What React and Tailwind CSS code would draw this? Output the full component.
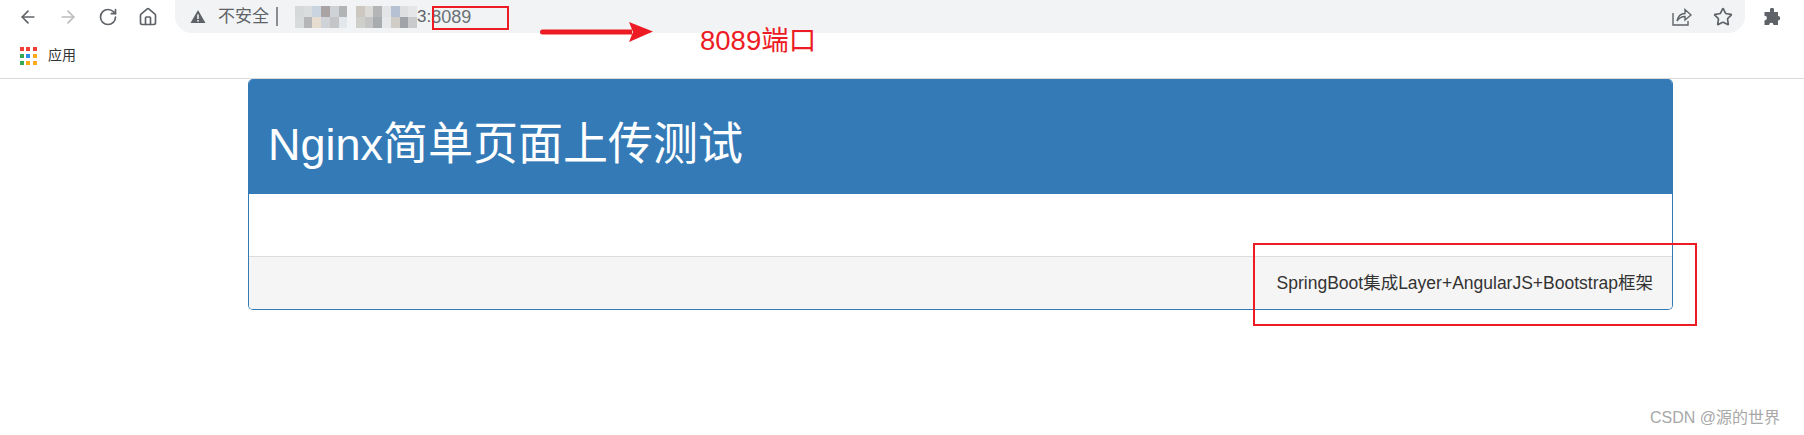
import React from 'react';
import { ArrowLeft, ArrowRight, RotateCw, Home, Star } from 'lucide-react';

const FONT = 'font-["Liberation_Sans","Noto_Sans_CJK_SC",sans-serif]';

const appsColors = [
    'bg-[#ef4136]', 'bg-[#ef4136]', 'bg-[#ef4136]',
    'bg-[#34a853]', 'bg-[#2d8cf0]', 'bg-[#fbab18]',
    'bg-[#34a853]', 'bg-[#fbab18]', 'bg-[#fbab18]',
];

// blurred-out IP address in the address bar, two rows of tiles
const mosaic = [
    'bg-[#d5d9d9]', 'bg-[#d9dddd]', 'bg-[#c9d4e0]', 'bg-[#a9a3a3]', 'bg-[#cfd2d6]', 'bg-[#b2b4b6]', 'bg-[#f1f3f4]',
    'bg-[#ccc7bf]', 'bg-[#dcdad6]', 'bg-[#b3b5b7]', 'bg-[#e3e5e6]', 'bg-[#b6c2d3]', 'bg-[#dddfe1]', 'bg-[#e4e6e7]',
    'bg-[#d8dbdb]', 'bg-[#b4b6b7]', 'bg-[#e6dccf]', 'bg-[#cfd2d6]', 'bg-[#c3c5c7]', 'bg-[#e2e7ec]', 'bg-[#f1f3f4]',
    'bg-[#cfcfcc]', 'bg-[#c4c5c4]', 'bg-[#a9acae]', 'bg-[#e6e8e9]', 'bg-[#d0ccc6]', 'bg-[#a0a4a8]', 'bg-[#c8cacc]',
];

export default function App() {
    return (
        <div className={`relative w-[1804px] h-[435px] overflow-hidden bg-white ${FONT}`}>
            {/* Browser chrome */}
            <div className="h-[79px] border-b border-[#d9d9d9]">
                <div className="flex h-[33px] items-center text-[#5f6368]">
                    <div className="flex w-[175px] items-center gap-[20px] pl-[18px]">
                        <ArrowLeft size={20} strokeWidth={2} />
                        <ArrowRight size={20} strokeWidth={2} className="text-[#bcbcbc]" />
                        <RotateCw size={20} strokeWidth={2} />
                        <Home size={20} strokeWidth={2} />
                    </div>
                    <div className="flex h-[33px] w-[1570px] items-center rounded-b-[17px] bg-[#f1f3f4] pl-[15px] pr-[12px]">
                        <svg width="16" height="15" viewBox="0 0 16 15" fill="#5f6368">
                            <path d="M8 1 L15.5 14 H0.5 Z" />
                            <rect x="7.2" y="5.5" width="1.6" height="4.5" fill="#f1f3f4" />
                            <rect x="7.2" y="11" width="1.6" height="1.6" fill="#f1f3f4" />
                        </svg>
                        <span className="ml-[12px] text-[17px] leading-none text-[#5f6368]">不安全</span>
                        <span className="ml-[7px] h-[19px] w-[2px] bg-[#8a8d91]" />
                        <div className="ml-[17px] grid h-[22px] w-[122px] grid-cols-[repeat(14,1fr)]">
                            {mosaic.map((c, i) => (
                                <div key={i} className={c} />
                            ))}
                        </div>
                        <span className="text-[17px] leading-none text-[#5f6368]">3:</span>
                        <span className="text-[18px] leading-none text-[#6b7075]">8089</span>
                        <div className="ml-auto flex items-center gap-[21px]">
                            <svg width="20" height="19" viewBox="0 0 20 19" fill="none" stroke="#5f6368" strokeWidth="1.4">
                                <path d="M1 6 V18 H16 V14" />
                                <path d="M5 14 C6 9 9 6.5 13 6.5 V2.5 L19 8 L13 13 V9.5 C10 9.5 7 11 5 14 Z" />
                            </svg>
                            <Star size={20} strokeWidth={2} />
                        </div>
                    </div>
                    <svg className="ml-[18px]" width="18" height="18" viewBox="0 0 18 18" fill="#5f6368">
                        <path d="M7 1 a2.2 2.2 0 0 1 4 0 V4 H15 V8 a2.2 2.2 0 0 1 0 4.4 V17 H10.5 a2.2 2.2 0 0 0 -4.4 0 H1.5 V12.5 a2.4 2.4 0 0 0 0 -4.8 V4 H7 Z" />
                    </svg>
                </div>
                <div className="flex h-[45px] items-center pl-[20px]">
                    <div className="grid w-[16px] grid-cols-3 gap-[3px]">
                        {appsColors.map((c, i) => (
                            <div key={i} className={`h-[4px] w-[4px] ${c}`} />
                        ))}
                    </div>
                    <span className="ml-[12px] text-[14px] text-[#333333]">应用</span>
                </div>
            </div>

            {/* Page panel */}
            <div className="ml-[248px] w-[1425px] overflow-hidden rounded-[5px] border border-t-0 border-[#337ab7]">
                <div className="flex h-[115px] items-center bg-[#337ab7] pl-[19px] pt-[16px] text-[45px] text-white">
                    Nginx简单页面上传测试
                </div>
                <div className="h-[62px] bg-white" />
                <div className="flex h-[53px] items-center justify-end border-t border-[#dddddd] bg-[#f5f5f5] pr-[19px] text-[17.5px] text-[#333333]">
                    SpringBoot集成Layer+AngularJS+Bootstrap框架
                </div>
            </div>

            {/* Red annotations drawn on top of the screenshot */}
            <div className="absolute left-[432px] top-[6px] h-[24px] w-[77px] border-2 border-[#ed1c24]" />
            <svg className="absolute left-[540px] top-[20px]" width="114" height="24" viewBox="0 0 114 24" fill="#ed1c24">
                <path d="M2.5 9.5 H92 V14.5 H2.5 a2.5 2.5 0 0 1 0 -5 Z" />
                <path d="M89 2 L113 11.5 L89 22 L93 12 Z" />
            </svg>
            <div className="absolute left-[700px] top-[25px] text-[27.5px] leading-[32px] text-[#ed1c24]">8089端口</div>
            <div className="absolute left-[1253px] top-[243px] h-[83px] w-[444px] border-2 border-[#ed1c24]" />

            {/* Watermark */}
            <div className="absolute left-[1650px] top-[408px] text-[16px] leading-[20px] text-[#a8a8a8]">CSDN @源的世界</div>
        </div>
    );
}
